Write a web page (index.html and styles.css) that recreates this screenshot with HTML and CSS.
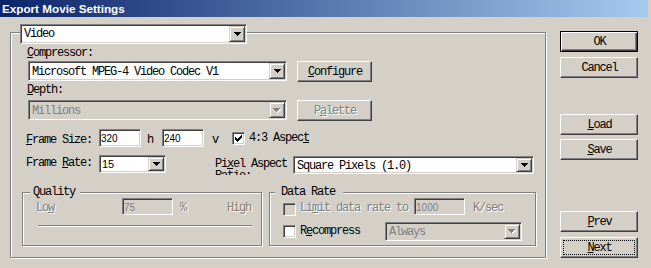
FILE: index.html
```html
<!DOCTYPE html>
<html>
<head>
<meta charset="utf-8">
<title>Export Movie Settings</title>
<link rel="stylesheet" href="styles.css">
</head>
<body>
<div class="window">
  <div class="titlebar">Export Movie Settings</div>
  <div class="content">
    <div class="main-group">
      <div class="combo combo-video">
        <span class="combo-text">Video</span>
        <span class="combo-btn"><svg width="7" height="4" viewBox="0 0 7 4"><path d="M0 0h7v1H0zM1 1h5v1H1zM2 2h3v1H2zM3 3h1v1H3z"/></svg></span>
      </div>
      <div class="label label-compressor"><u>C</u>ompressor:</div>
      <div class="row row-compressor">
        <div class="combo combo-wide">
          <span class="combo-text">Microsoft MPEG-4 Video Codec V1</span>
          <span class="combo-btn"><svg width="7" height="4" viewBox="0 0 7 4"><path d="M0 0h7v1H0zM1 1h5v1H1zM2 2h3v1H2zM3 3h1v1H3z"/></svg></span>
        </div>
        <button class="btn btn-side"><u>C</u>onfigure</button>
      </div>
      <div class="label label-depth"><u>D</u>epth:</div>
      <div class="row row-depth">
        <div class="combo combo-wide disabled">
          <span class="combo-text">Millions</span>
          <span class="combo-btn"><svg width="8" height="5" viewBox="0 0 8 5"><path fill="#fff" d="M1 1h7v1H1zM2 2h5v1H2zM3 3h3v1H3zM4 4h1v1H4z"/><path fill="#808080" d="M0 0h7v1H0zM1 1h5v1H1zM2 2h3v1H2zM3 3h1v1H3z"/></svg></span>
        </div>
        <button class="btn btn-side disabled">P<u>a</u>lette</button>
      </div>
      <div class="row row-size">
        <span class="label field-label"><u>F</u>rame Size:</span>
        <span class="field field-size">320</span>
        <span class="label unit-h">h</span>
        <span class="field field-size">240</span>
        <span class="label unit-v">v</span>
        <span class="check check-aspect"><svg width="7" height="7" viewBox="0 0 7 7"><path d="M0 2h1v3H0zM1 3h1v3H1zM2 4h1v3H2zM3 3h1v3H3zM4 2h1v3H4zM5 1h1v3H5zM6 0h1v3H6z"/></svg></span>
        <span class="label check-label">4:3 Aspec<u>t</u></span>
      </div>
      <div class="row row-rate">
        <span class="label field-label rate-label">Frame <u>R</u>ate:</span>
        <div class="combo combo-rate">
          <span class="combo-text num">15</span>
          <span class="combo-btn"><svg width="7" height="4" viewBox="0 0 7 4"><path d="M0 0h7v1H0zM1 1h5v1H1zM2 2h3v1H2zM3 3h1v1H3z"/></svg></span>
        </div>
        <span class="pixel-label">Pi<u>x</u>el Aspect Ratio:</span>
        <div class="combo combo-pixel">
          <span class="combo-text">Square Pixels (1.0)</span>
          <span class="combo-btn"><svg width="7" height="4" viewBox="0 0 7 4"><path d="M0 0h7v1H0zM1 1h5v1H1zM2 2h3v1H2zM3 3h1v1H3z"/></svg></span>
        </div>
      </div>
      <div class="row row-groups">
        <div class="group group-quality">
          <span class="legend legend-quality">Quality</span>
          <div class="group-row">
            <span class="label dis-text low">Lo<u>w</u></span>
            <span class="field field-quality disabled">75</span>
            <span class="label dis-text pct">%</span>
            <span class="label dis-text high">High</span>
          </div>
          <div class="slider-line"></div>
        </div>
        <div class="group group-data">
          <span class="legend legend-data">Data Rate</span>
          <div class="group-row">
            <span class="check disabled check-limit"></span>
            <span class="label dis-text limit">Li<u>m</u>it data rate to</span>
            <span class="field field-limit disabled">1000</span>
            <span class="label dis-text ksec">K/sec</span>
          </div>
          <div class="group-row row-recompress">
            <span class="check check-recompress"></span>
            <span class="label recompress">R<u>e</u>compress</span>
            <div class="combo combo-always disabled">
              <span class="combo-text">Always</span>
              <span class="combo-btn"><svg width="8" height="5" viewBox="0 0 8 5"><path fill="#fff" d="M1 1h7v1H1zM2 2h5v1H2zM3 3h3v1H3zM4 4h1v1H4z"/><path fill="#808080" d="M0 0h7v1H0zM1 1h5v1H1zM2 2h3v1H2zM3 3h1v1H3z"/></svg></span>
            </div>
          </div>
        </div>
      </div>
    </div>
    <div class="side-buttons">
      <button class="btn btn-default">OK</button>
      <button class="btn btn-cancel">Cancel</button>
      <button class="btn btn-load"><u>L</u>oad</button>
      <button class="btn btn-save"><u>S</u>ave</button>
      <button class="btn btn-prev"><u>P</u>rev</button>
      <button class="btn btn-next"><u>N</u>ext</button>
    </div>
  </div>
</div>
</body>
</html>
```

FILE: styles.css
```css
* { box-sizing: border-box; }
html, body { margin: 0; padding: 0; }
body {
  width: 651px;
  height: 268px;
  overflow: hidden;
  background: #d4d0c8;
  font-family: "Liberation Mono", "DejaVu Sans Mono", monospace;
  font-size: 12px;
  letter-spacing: -1.2px;
  line-height: 12px;
  color: #000;
}
u { text-decoration: underline; text-underline-offset: 1px; }
svg { display: block; shape-rendering: crispEdges; }

.titlebar {
  width: 648px;
  height: 17px;
  padding-left: 2px;
  background: linear-gradient(to right, #0a246a, #a6caf0);
  color: #fff;
  font: bold 11.7px/17px "Liberation Sans", Arial, sans-serif;
  letter-spacing: 0;
  white-space: nowrap;
}

.content {
  display: flex;
  align-items: flex-start;
  padding-top: 15px;
}

.main-group {
  width: 536px;
  height: 226px;
  margin-left: 10px;
  padding-left: 16px;
  border: 1px solid #808080;
  box-shadow: inset 1px 1px 0 #fff, 1px 1px 0 #fff;
  display: flex;
  flex-direction: column;
  align-items: flex-start;
}

.label { display: block; height: 12px; white-space: nowrap; }
.row { display: flex; align-items: flex-start; }

/* combo boxes */
.combo {
  display: flex;
  background: #fff;
  border: 1px solid;
  border-color: #808080 #fff #fff #808080;
  box-shadow: inset 1px 1px 0 #404040, inset -1px -1px 0 #d4d0c8;
  padding: 1px;
}
.combo.disabled { background: #d4d0c8; color: #808080; }
.combo-text {
  flex: 1;
  display: flex;
  align-items: center;
  padding-left: 2px;
  white-space: nowrap;
  overflow: hidden;
}
.combo-text.num {
  font: 11px/12px "Liberation Sans", Arial, sans-serif;
  letter-spacing: 0;
  padding-left: 1px;
}
.combo-btn {
  width: 16px;
  display: flex;
  align-items: center;
  justify-content: center;
  background: #d4d0c8;
  border: 1px solid;
  border-color: #d4d0c8 #404040 #404040 #d4d0c8;
  box-shadow: inset 1px 1px 0 #fff, inset -1px -1px 0 #808080;
}

.combo-video { width: 227px; height: 20px; margin: -9px 0 0 -7px; }
.label-compressor { margin-top: 3px; }
.row-compressor { margin-top: 2px; }
.combo-wide { width: 259px; height: 20px; margin-left: 1px; }
.combo-wide .combo-text { padding-top: 1px; }
.label-depth { margin-top: 2px; }
.row-depth { margin-top: 4px; }

/* buttons */
.btn {
  font: inherit;
  letter-spacing: inherit;
  line-height: 12px;
  color: #000;
  background: #d4d0c8;
  margin: 0;
  padding: 0 0 0 1px;
  border: 1px solid;
  border-color: #fff #404040 #404040 #fff;
  box-shadow: inset -1px -1px 0 #808080;
  display: flex;
  align-items: center;
  justify-content: center;
  white-space: nowrap;
}
.btn.disabled { color: #808080; text-shadow: 1px 1px 0 #fff; }
.btn-side { width: 75px; height: 21px; margin-left: 10px; }

/* fields */
.field {
  display: block;
  background: #fff;
  border: 1px solid;
  border-color: #808080 #fff #fff #808080;
  box-shadow: inset 1px 1px 0 #404040, inset -1px -1px 0 #d4d0c8;
  font: 10px/14px "Liberation Sans", Arial, sans-serif;
  letter-spacing: 0;
  padding: 2px 0 0 1px;
  white-space: nowrap;
}
.field.disabled { background: #d4d0c8; color: #808080; }

.row-size { margin-top: 8px; }
.field-label { width: 73px; margin-left: -1px; margin-top: 5px; }
.field-size { width: 42px; height: 18px; }
.unit-h { width: 15px; margin-left: 6px; margin-top: 5px; }
.unit-v { width: 20px; margin-left: 8px; margin-top: 5px; }

.check {
  display: block;
  width: 13px;
  height: 13px;
  background: #fff;
  border: 1px solid;
  border-color: #808080 #fff #fff #808080;
  box-shadow: inset 1px 1px 0 #404040, inset -1px -1px 0 #d4d0c8;
  padding: 2px;
}
.check.disabled { background: #d4d0c8; }
.check-aspect { margin-top: 3px; }
.check-label { margin-left: 4px; margin-top: 3px; }

.row-rate { margin-top: 8px; }
.rate-label { margin-top: 2px; }
.combo-rate { width: 67px; height: 18px; }
.pixel-label {
  display: block;
  width: 78px;
  height: 17px;
  overflow: hidden;
  margin-left: 49px;
  margin-top: 3px;
  white-space: normal;
}
.combo-pixel { width: 241px; height: 18px; margin-top: 1px; }
.combo-pixel .combo-text { padding-top: 1px; }

/* group boxes */
.row-groups { margin-top: 17px; margin-left: -5px; }
.group {
  height: 54px;
  border: 1px solid #808080;
  box-shadow: inset 1px 1px 0 #fff, 1px 1px 0 #fff;
  display: flex;
  flex-direction: column;
  align-items: flex-start;
}
.group-quality { width: 240px; }
.group-data { width: 267px; margin-left: 7px; }
.legend {
  display: block;
  height: 12px;
  margin-top: -7px;
  background: #d4d0c8;
  white-space: nowrap;
}
.legend-quality { margin-left: 7px; padding: 0 5px 0 3px; }
.legend-data { margin-left: 5px; padding: 0 8px 0 6px; }
.group-row { display: flex; align-items: flex-start; }

.dis-text { color: #808080; text-shadow: 1px 1px 0 #fff; }
.low { width: 86px; margin-left: 13px; margin-top: 4px; }
.field-quality { width: 51px; height: 17px; }
.pct { margin-left: 7px; margin-top: 4px; }
.high { margin-left: 41px; margin-top: 4px; }
.slider-line {
  width: 214px;
  height: 2px;
  margin-left: 15px;
  margin-top: 10px;
  border-top: 1px solid #808080;
  border-bottom: 1px solid #fff;
}

.check-limit { margin-left: 13px; margin-top: 5px; }
.limit { margin-left: 4px; margin-top: 4px; }
.field-limit { width: 51px; height: 17px; margin-left: 6px; }
.ksec { margin-left: 8px; margin-top: 4px; }
.row-recompress { margin-top: 6px; }
.check-recompress { margin-left: 13px; margin-top: 3px; }
.recompress { margin-left: 4px; margin-top: 3px; }
.combo-always { width: 137px; height: 19px; margin-left: 25px; }

/* side buttons */
.side-buttons {
  display: flex;
  flex-direction: column;
  width: 78px;
  margin-left: 14px;
  margin-top: -1px;
}
.side-buttons .btn { width: 78px; height: 21px; }
.btn-default {
  border: 1px solid #000;
  box-shadow: inset 1px 1px 0 #fff, inset -1px -1px 0 #404040, inset -2px -2px 0 #808080;
}
.btn-cancel { margin-top: 5px; }
.btn-load { margin-top: 36px; }
.btn-save { margin-top: 4px; }
.btn-prev { margin-top: 51px; }
.btn-next { margin-top: 5px; outline: 1px dotted #000; outline-offset: -4px; }
```
